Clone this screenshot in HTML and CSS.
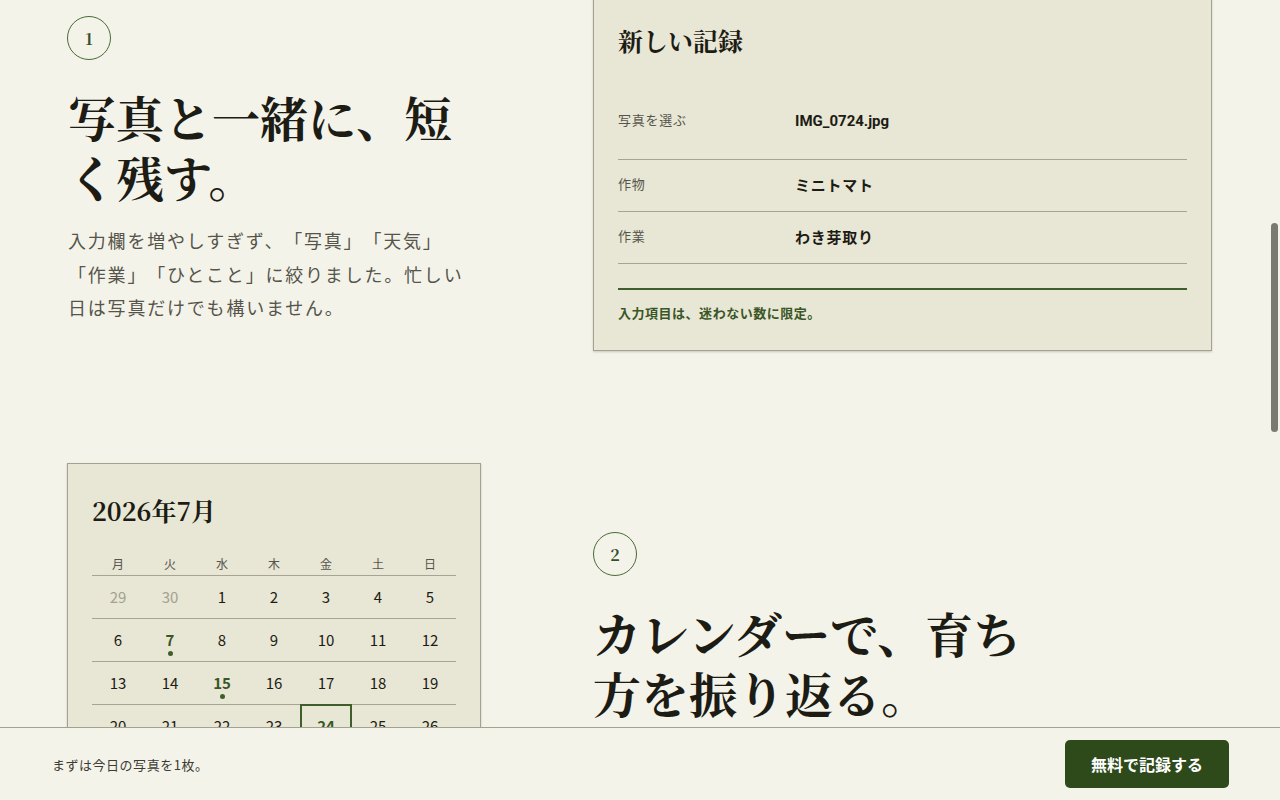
FILE: index.html
```html
<!DOCTYPE html>
<html lang="ja">
<head>
<meta charset="UTF-8">
<title>写真と一緒に、短く残す。</title>
<link rel="stylesheet" href="styles.css">
</head>
<body>
	<main class="steps">
		<!-- step 1 -->
		<section class="step step-first">
			<div class="step-num">1</div>
			<h2 class="step-title">写真と一緒に、短く残す。</h2>
			<p class="step-lead">入力欄を増やしすぎず、「写真」「天気」「作業」「ひとこと」に絞りました。忙しい日は写真だけでも構いません。</p>
		</section>

		<div class="card record">
			<h3 class="card-title">新しい記録</h3>
			<div class="field field-photo">
				<span class="field-label">写真を選ぶ</span>
				<span class="field-value file-name">IMG_0724.jpg</span>
			</div>
			<div class="field">
				<span class="field-label">作物</span>
				<span class="field-value">ミニトマト</span>
			</div>
			<div class="field">
				<span class="field-label">作業</span>
				<span class="field-value">わき芽取り</span>
			</div>
			<p class="record-note">入力項目は、迷わない数に限定。</p>
		</div>

		<!-- step 2 -->
		<div class="card calendar">
			<h3 class="card-title">2026年7月</h3>
			<div class="cal-row cal-head">
				<span>月</span><span>火</span><span>水</span><span>木</span><span>金</span><span>土</span><span>日</span>
			</div>
			<div class="cal-row">
				<span class="muted">29</span><span class="muted">30</span><span>1</span><span>2</span><span>3</span><span>4</span><span>5</span>
			</div>
			<div class="cal-row">
				<span>6</span><span class="marked">7</span><span>8</span><span>9</span><span>10</span><span>11</span><span>12</span>
			</div>
			<div class="cal-row">
				<span>13</span><span>14</span><span class="marked">15</span><span>16</span><span>17</span><span>18</span><span>19</span>
			</div>
			<div class="cal-row">
				<span>20</span><span>21</span><span>22</span><span>23</span><span class="today">24</span><span>25</span><span>26</span>
			</div>
			<div class="cal-row">
				<span>27</span><span>28</span><span>29</span><span>30</span><span>31</span><span class="muted">1</span><span class="muted">2</span>
			</div>
		</div>

		<section class="step step-second">
			<div class="step-num">2</div>
			<h2 class="step-title">カレンダーで、育ち方を振り返る。</h2>
		</section>
	</main>

	<footer class="cta-bar">
		<span class="cta-text">まずは今日の写真を1枚。</span>
		<a class="cta-button" href="#">無料で記録する</a>
	</footer>

	<div class="scroll-thumb"></div>
</body>
</html>
```

FILE: styles.css
```css
html {
  overflow: hidden;
}

body {
  margin: 0;
  background-color: #f4f3ea;
  color: #1c1c14;
  font-family: "Noto Sans CJK JP", "Noto Sans", sans-serif;
  text-spacing-trim: space-all;
}

.steps {
  display: grid;
  grid-template-columns: 414px 1fr;
  column-gap: 112px;
  row-gap: 112px;
  padding: 0 68px 160px 67px;
  align-items: start;
}

/* step text */
.step-first {
  padding-top: 16px;
  padding-left: 1px;
}

.step-second {
  padding-top: 69px;
  max-width: 460px;
}

.step-num {
  width: 42px;
  height: 42px;
  border: 1px solid #4a6a35;
  border-radius: 50%;
  display: flex;
  align-items: center;
  justify-content: center;
  font-family: "Noto Serif CJK JP", "Liberation Serif", serif;
  font-size: 16px;
  font-weight: 700;
  color: #34502a;
}

.step-first .step-num {
  margin-left: -1px;
}

.step-title {
  margin: 27px 0 0;
  font-family: "Noto Serif CJK JP", "Liberation Serif", "Noto Sans CJK JP", serif;
  font-size: 48px;
  line-height: 60px;
  font-weight: 700;
  color: #1c1c14;
}

.step-lead {
  margin: 17px 0 0;
  font-size: 18px;
  line-height: 33.5px;
  letter-spacing: 0.1em;
  color: #55554b;
}

/* cards */
.card {
  background-color: #e8e6d5;
  border: 1px solid #a3a291;
  box-shadow: 0 1px 2px rgba(0, 0, 0, 0.18);
}

.card-title {
  margin: 0;
  font-family: "Noto Serif CJK JP", "Liberation Serif", "Noto Sans CJK JP", serif;
  font-size: 25px;
  line-height: 36px;
  font-weight: 700;
  color: #1c1c14;
}

.record {
  margin-top: -10px;
  padding: 31px 24px 27px;
}

.field {
  display: grid;
  grid-template-columns: 177px 1fr;
  padding: 14px 0 15px;
  border-bottom: 1px solid #a6a594;
}

.field-photo {
  margin-top: 38px;
  padding-bottom: 27px;
}

.field-label {
  font-size: 13px;
  line-height: 20px;
  letter-spacing: 0.06em;
  color: #55554b;
}

.field-value {
  font-size: 15px;
  line-height: 22px;
  font-weight: 700;
  letter-spacing: 0.05em;
  color: #1c1c14;
}

.file-name {
  font-family: Roboto, "Noto Sans CJK JP", sans-serif;
  letter-spacing: 0;
}

.record-note {
  margin: 24px 0 0;
  padding-top: 13px;
  border-top: 2px solid #3f5f2a;
  font-size: 13px;
  line-height: 20px;
  font-weight: 700;
  letter-spacing: 0.04em;
  color: #3a5626;
}

/* calendar */
.calendar {
  padding: 28px 24px 24px;
}

.calendar .card-title {
  margin-bottom: 24px;
}

.cal-row {
  display: grid;
  grid-template-columns: repeat(7, 1fr);
  border-bottom: 1px solid #a6a594;
}

.cal-row span {
  position: relative;
  height: 42px;
  line-height: 42px;
  text-align: center;
  font-size: 15px;
  color: #1c1c14;
}

.cal-head span {
  height: auto;
  padding: 3px 0 2px;
  line-height: 18px;
  font-size: 12px;
  color: #55554b;
}

.cal-row .muted {
  color: #a3a291;
}

.cal-row .marked {
  font-weight: 700;
  color: #3a5626;
}

.cal-row .marked::after {
  content: "";
  position: absolute;
  left: 50%;
  bottom: 5px;
  width: 5px;
  height: 5px;
  margin-left: -2px;
  border-radius: 50%;
  background-color: #3f5f2a;
}

.cal-row .today {
  margin-top: -1px;
  height: 43px;
  line-height: 44px;
  font-weight: 700;
  color: #3a5626;
  box-shadow: inset 0 0 0 2px #3f5f2a;
}

/* bottom bar */
.cta-bar {
  position: fixed;
  left: 0;
  right: 0;
  bottom: 0;
  height: 72px;
  border-top: 1px solid #a3a291;
  background-color: #f4f3ea;
  display: flex;
  align-items: center;
  justify-content: space-between;
  padding: 0 51px 0 52px;
}

.cta-text {
  font-size: 13px;
  letter-spacing: 0.04em;
  color: #3c3c34;
}

.cta-button {
  width: 164px;
  height: 48px;
  display: flex;
  align-items: center;
  justify-content: center;
  border-radius: 5px;
  background-color: #2e4a1b;
  color: #ffffff;
  font-size: 16px;
  font-weight: 700;
  text-decoration: none;
}

.scroll-thumb {
  position: fixed;
  top: 223px;
  right: 2px;
  width: 7px;
  height: 209px;
  border-radius: 4px;
  background-color: #7b7a70;
}
```
